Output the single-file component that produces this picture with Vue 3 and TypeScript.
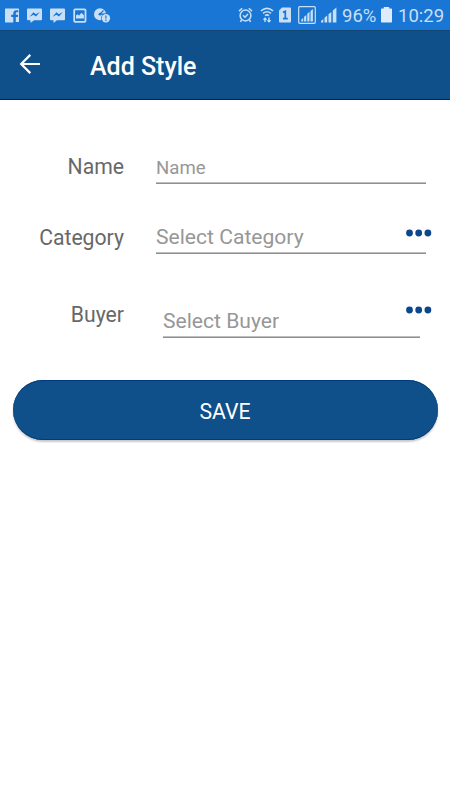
<script setup lang="ts">
import { ref } from 'vue'

interface Field {
  id: string
  label: string
  placeholder: string
  picker: boolean
}

const fields: Field[] = [
  { id: 'name', label: 'Name', placeholder: 'Name', picker: false },
  { id: 'category', label: 'Category', placeholder: 'Select Category', picker: true },
  { id: 'buyer', label: 'Buyer', placeholder: 'Select Buyer', picker: true },
]
const battery = ref('96%')
const time = ref('10:29')
</script>

<template>
  <div class="screen">
    <div class="status">
      <div class="notifications">
        <svg width="14" height="15" viewBox="0 0 14 15"><path fill="currentColor" d="M.5.500h13a.5.500 0 0 1 .5.500v13h-3.200V9h2l.4-2.200h-2.400V5.500c0-.8.300-1.200 1.200-1.200h1.300v-2h-2c-2 0-3 1.100-3 2.900v1.600H6.200V9h2.100v5.500H.5A.5.500 0 0 1 0 14V1a.5.500 0 0 1 .5-.5z"/></svg>
        <svg v-for="n in 2" :key="n" width="15" height="15" viewBox="0 0 15 15"><path fill="currentColor" d="M1 .5h13a1 1 0 0 1 1 1v9.800a1 1 0 0 1-1 1H7L3.500 15v-2.700H1a1 1 0 0 1-1-1V1.500a1 1 0 0 1 1-1z"/><path class="cut" d="M2.500 8.700l4-4.400 2.300 2L12.800 4 9 8.600 6.500 6.800z"/></svg>
        <svg width="14" height="15" viewBox="0 0 14 15"><rect x="1.200" y="1.300" width="11.300" height="12.500" rx="1" fill="none" stroke="currentColor" stroke-width="1.800"/><path fill="currentColor" d="M3 10.500V7.500l1.600-1.300 1.500 1.300L8.500 4.800l2.400 2.400v3.300z"/></svg>
        <svg width="17" height="15" viewBox="0 0 17 15"><circle cx="6" cy="6.200" r="6" fill="currentColor"/><path class="cut-line" d="M6 6.200L9.500 2.500M6 6.200h4.800"/><circle cx="6" cy="6.200" r="1.400" class="cut"/><circle cx="11.900" cy="10.200" r="4.900" class="cut"/><circle cx="11.900" cy="10.200" r="4.200" fill="currentColor"/><path class="cut-line" d="M11.900 7.400v3.200M11.900 11.600v1.300"/></svg>
      </div>
      <div class="system">
        <svg class="alarm" width="15" height="16" viewBox="0 0 15 16" fill="none" stroke="currentColor" stroke-width="1.500"><circle cx="7.500" cy="8.500" r="5.400"/><path d="M1 4.100L4.200 1.300M10.800 1.300L14 4.100M3.500 12.700L2.500 15M11.500 12.700l1 2.300M5 8.200l2 2 3-3.300"/></svg>
        <svg class="wifi" width="14" height="16" viewBox="0 0 14 16" fill="none" stroke="currentColor" stroke-width="1.600"><path d="M1 3.800Q7-1.200 13 3.800M3 6.300q4-3.200 8 0M5 8.700q2-1.600 4 0"/><path d="M5 15v-4M3.500 12.800L5 11.300l1.500 1.500M9 10.500V15M7.500 13.200L9 14.700l1.500-1.500" stroke-width="1.400"/></svg>
        <svg class="sim" width="12" height="16" viewBox="0 0 12 16"><path fill="currentColor" d="M3 .5h8a1 1 0 0 1 1 1v13a1 1 0 0 1-1 1H1a1 1 0 0 1-1-1v-11z"/><path class="digit" d="M4 5.400L6.300 4.400v7.200M4 11.700h4.800"/></svg>
        <svg class="boxed" width="18" height="18" viewBox="0 0 18 18"><rect x=".7" y=".7" width="16.600" height="16.600" rx="1" fill="none" stroke="currentColor" stroke-width="1.200"/><path fill="currentColor" d="M3.300 13.500l1.900-1.500v3.500H3.300zM6.100 10.700l2.200-1.800v6.600H6.100zM9.300 7.700l2.200-1.900v9.700H9.300zM12.500 4.900l2.400-2v12.600h-2.400z"/></svg>
        <svg class="signal" width="16" height="16" viewBox="0 0 16 16"><path fill="currentColor" d="M0 14l2.300-2v3.600H0zM3.500 10.800l2.700-2.300v7.100H3.500zM7.500 7.300l2.800-2.400v10.700H7.500zM11.800 3.600l3.600-3v15h-3.600z"/></svg>
        <span class="percent">{{ battery }}</span>
        <svg class="battery" width="11" height="16" viewBox="0 0 11 16"><path fill="currentColor" d="M2.800 0h5.400v1.500h2.100a.7.700 0 0 1 .7.700v12.600a.7.700 0 0 1-.7.700H.7a.7.700 0 0 1-.7-.7V2.200a.7.700 0 0 1 .7-.7h2.100z"/></svg>
        <span class="time">{{ time }}</span>
      </div>
    </div>

    <header class="toolbar">
      <svg class="back" width="22" height="22" viewBox="0 0 22 22" fill="none" stroke="#fff" stroke-width="2.200"><path d="M22 11H3M12.300 1.900L3.200 11l9.100 9.100"/></svg>
      <h1>Add Style</h1>
    </header>

    <main>
      <div v-for="f in fields" :key="f.id" class="row" :class="f.id">
        <span class="label">{{ f.label }}</span>
        <div class="input">{{ f.placeholder }}</div>
        <svg v-if="f.picker" class="dots" width="26" height="8" viewBox="0 0 26 8" fill="#0b478c"><circle cx="3.500" cy="4" r="3.400"/><circle cx="12.700" cy="4" r="3.400"/><circle cx="21.900" cy="4" r="3.400"/></svg>
      </div>
      <button type="button">SAVE</button>
    </main>
  </div>
</template>

<style>
body { background: #fff; }
</style>

<style scoped>
.screen { width: 450px; height: 800px; overflow: hidden; background: #fff; font-family: Roboto, sans-serif; }
.status { height: 30px; box-sizing: border-box; padding: 0 6px 0 5px; display: flex; justify-content: space-between; align-items: center; background: #1976d5; color: #c8dff6; }
.notifications { display: flex; align-items: center; gap: 8px; }
.notifications svg:last-child { margin-left: -1px; }
.system { display: flex; align-items: center; }
svg { display: block; flex: none; }
.cut { fill: #1976d5; }
.cut-line { fill: none; stroke: #1976d5; stroke-width: 1.2; }
.digit { fill: none; stroke: #1976d5; stroke-width: 1.7; }
.alarm { margin-right: 7px; }
.wifi { margin-right: 5px; }
.sim { margin-right: 7px; }
.boxed { margin-right: 5px; }
.signal { margin-right: 5px; }
.percent, .time { font-size: 18.5px; line-height: 30px; padding-top: 1px; }
.percent { width: 39px; }
.battery { margin-right: 6px; color: #deebfa; }
.time { width: 46px; }
.toolbar { height: 70px; box-sizing: border-box; border-bottom: 1px solid #00205f; padding: 0 0 0 18px; display: flex; align-items: center; background: #10508a; box-shadow: inset 0 1px 0 #124675; }
.back { margin: 0 50px 1px 0; }
h1 { margin: 4px 0 0; font-size: 25px; line-height: 30px; font-weight: 500; color: #fff; }
main { padding: 50px 12px 0; }
.row { display: grid; grid-template-columns: 112px 270px; column-gap: 32px; position: relative; height: 34px; }
.label { font-size: 21.2px; line-height: 34px; color: #686868; text-align: right; white-space: nowrap; }
.input { box-sizing: border-box; height: 34px; border-bottom: 1px solid #8f8f8f; box-shadow: inset 0 -1px 0 #bdbdbd; color: #979797; font-size: 21.1px; line-height: 34px; white-space: nowrap; }
.name .input { font-size: 18.6px; line-height: 36px; }
.category { margin-top: 36px; }
.category .label { line-height: 35px; }
.buyer { margin-top: 43px; height: 41px; }
.buyer .label { line-height: 35px; }
.buyer .input { margin: 7px 6px 0 7px; }
.dots { position: absolute; right: 6px; top: 9px; }
button { display: block; width: 425px; height: 60px; margin: 42px 0 0 .5px; padding: 2px 0 0; border: 0; border-radius: 30px; background: #10508a; color: #fff; font: 400 21.2px Roboto, sans-serif; box-shadow: inset 0 1px 0 #003c7d, inset 0 -1px 0 #003c7d, 0 2px 2px rgba(0, 0, 0, .22); }
</style>
